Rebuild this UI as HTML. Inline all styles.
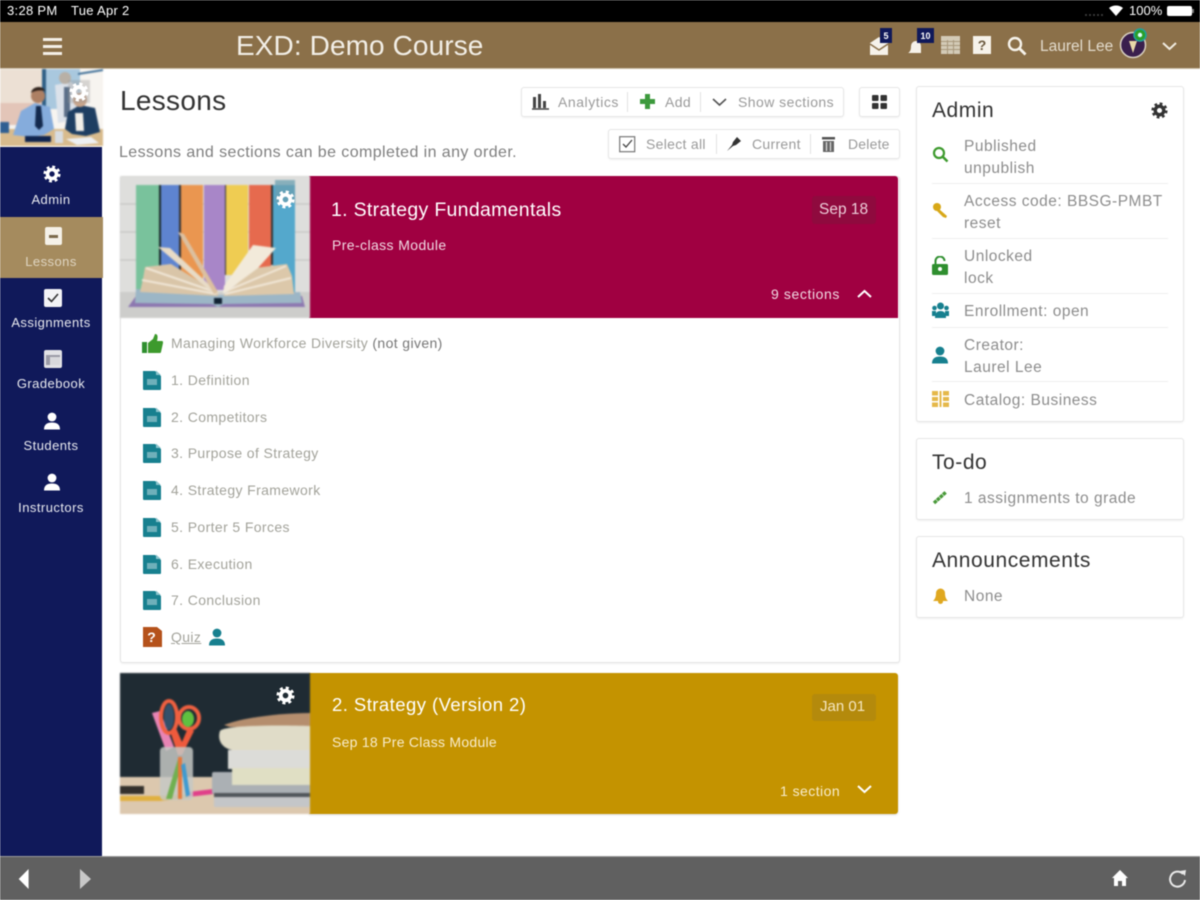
<!DOCTYPE html>
<html lang="en"><head><meta charset="utf-8"><title>Lessons</title>
<style>
html,body{margin:0;padding:0;background:#fff}
#p{position:relative;width:1200px;height:900px;overflow:hidden;background:#fff;font-family:"Liberation Sans",sans-serif;filter:blur(.45px)}
#p div,#p svg,#p span.t{position:absolute}
.t{white-space:nowrap;line-height:20px;height:20px;font-size:14px;color:#8c8c8c}
.w{color:#fff}
.n{color:#fff;font-size:13px;letter-spacing:.45px;width:102px;left:0;text-align:center;opacity:.9}
.box{background:#fff;border:1px solid #e6e6e6;border-radius:3px;box-sizing:border-box;box-shadow:0 1px 2px rgba(0,0,0,.06)}
.l{color:#a3a39b;font-size:14px;left:171px;letter-spacing:.38px}
.p{color:#8d8d8d;font-size:15.5px;left:964px;letter-spacing:.5px}
.h{color:#333;font-size:21px;left:932px;letter-spacing:.55px}
.b{font-size:14px;color:#9a9a9a;letter-spacing:.4px}
.sep{width:1px;background:#e2e2e2}
.hr{left:932px;width:236px;height:1px;background:#eee}
.img{filter:blur(.8px)}
</style></head><body><div id="p">
<svg width="0" height="0" style="left:0;top:0"><defs>
<symbol id="gear" viewBox="0 0 20 20"><circle cx="10" cy="10" r="5" fill="none" stroke="currentColor" stroke-width="4"/><circle cx="10" cy="10" r="8" fill="none" stroke="currentColor" stroke-width="3" stroke-dasharray="3.2 3.08"/></symbol>
<symbol id="doc" viewBox="0 0 18 20"><path d="M0 1h12l6 5v13a1 1 0 0 1-1 1H1a1 1 0 0 1-1-1z" fill="#17808f"/><path d="M13 0.5l5 4.500h-5z" fill="#8cc4cc"/><rect x="4" y="9" width="10" height="6" fill="#6fb0ba"/></symbol>
<symbol id="user" viewBox="0 0 16 18"><circle cx="8" cy="5" r="4.400" fill="currentColor"/><path d="M0 17.500c0-5 3-7 8-7s8 2 8 7z" fill="currentColor"/></symbol>
</defs></svg>

<!-- status bar -->
<div style="left:0;top:0;width:1200px;height:22px;background:#000"></div>
<span class="t w" style="left:7px;top:1px;font-size:13px;letter-spacing:.3px">3:28 PM</span>
<span class="t w" style="left:71px;top:1px;font-size:13px;letter-spacing:.3px">Tue Apr 2</span>
<svg style="left:1085px;top:5px" width="40" height="12" viewBox="0 0 40 12"><g fill="#444"><circle cx="1" cy="10" r="1"/><circle cx="5" cy="10" r="1"/><circle cx="9" cy="10" r="1"/><circle cx="13" cy="10" r="1"/><circle cx="17" cy="10" r="1"/></g><path d="M24 4a11 11 0 0 1 14 0l-7 8z" fill="#fff" transform="translate(0 -1)"/></svg>
<span class="t w" style="left:1129px;top:1px;font-size:13px">100%</span>
<div style="left:1167px;top:6px;width:25px;height:10px;background:#fff;border-radius:2px"></div>
<div style="left:1192px;top:9px;width:2px;height:4px;background:#777"></div>

<!-- header -->
<div style="left:0;top:22px;width:1200px;height:46px;background:#8b7049;border-bottom:1px solid #c9bda6"></div>
<div style="left:43px;top:38px;width:19px;height:2.500px;background:#f4efe6"></div>
<div style="left:43px;top:45px;width:19px;height:2.500px;background:#f4efe6"></div>
<div style="left:43px;top:52px;width:19px;height:2.500px;background:#f4efe6"></div>
<span class="t" style="left:236px;top:33px;height:26px;line-height:26px;font-size:28px;letter-spacing:.1px;color:#f2eee6">EXD: Demo Course</span>
<svg style="left:868px;top:36px" width="22" height="20" viewBox="0 0 22 20"><path d="M2 7l9-6 9 6v12H2z" fill="#f6f2ea"/><path d="M2 8l9 6 9-6" fill="none" stroke="#8b7049" stroke-width="1.500"/></svg>
<div style="left:880px;top:28px;width:12px;height:15px;background:#10195a"></div>
<span class="t w" style="left:880px;top:26px;width:12px;text-align:center;font-size:9px;font-weight:bold">5</span>
<svg style="left:906px;top:36px" width="20" height="20" viewBox="0 0 20 20"><path d="M2 17c2-1 3-3 3-7a5 5 0 0 1 10 0v7z" fill="#f6f2ea"/></svg>
<div style="left:917px;top:28px;width:17px;height:15px;background:#10195a"></div>
<span class="t w" style="left:917px;top:26px;width:17px;text-align:center;font-size:9px;font-weight:bold">10</span>
<svg style="left:941px;top:36px" width="19" height="18" viewBox="0 0 19 18"><rect width="19" height="18" fill="#d3cab6"/><path d="M0 5.500h19M0 9.500h19M0 13.500h19M6.500 4v14M12.500 4v14" stroke="#a8987c" stroke-width="1"/></svg>
<div style="left:973px;top:36px;width:18px;height:18px;background:#f6f2ea"></div>
<span class="t" style="left:973px;top:35px;width:18px;text-align:center;font-size:14px;font-weight:bold;color:#6b5a3f">?</span>
<svg style="left:1007px;top:36px" width="20" height="20" viewBox="0 0 20 20"><circle cx="8" cy="8" r="6" fill="none" stroke="#f6f2ea" stroke-width="2.400"/><path d="M12.500 12.500l6 6" stroke="#f6f2ea" stroke-width="2.800"/></svg>
<span class="t" style="left:1040px;top:37px;font-size:15.5px;color:#e2dacb">Laurel Lee</span>
<svg style="left:1119px;top:27px" width="30" height="33" viewBox="0 0 30 33"><circle cx="14" cy="18" r="12.500" fill="#3a1f4d" stroke="#d8d0c0" stroke-width="1.500"/><path d="M10 14l4 12 4-12z" fill="#e8d8a8"/><circle cx="21" cy="8" r="6" fill="#2aa02a" stroke="#1fa0a0" stroke-width="1.500"/><circle cx="21" cy="8" r="2.200" fill="#dff"/></svg>
<svg style="left:1162px;top:41px" width="15" height="10" viewBox="0 0 15 10"><path d="M1 2l6.500 6L14 2" fill="none" stroke="#f0ebe0" stroke-width="2"/></svg>

<!-- sidebar -->
<div style="left:0;top:147px;width:102px;height:710px;background:#10195a"></div>
<svg class="img" style="left:0;top:69px" width="103" height="77" viewBox="0 0 103 77">
<rect width="103" height="77" fill="#f7f4f0"/>
<rect x="0" y="0" width="42" height="50" fill="#ece0d4"/><rect x="0" y="34" width="42" height="22" fill="#e3c5b8"/>
<rect x="44" y="0" width="36" height="40" fill="#a9c8de"/><rect x="42" y="0" width="4" height="44" fill="#2f5f86"/>
<path d="M78 4l25-4v2l-25 4z" fill="#3f6f98"/>
<rect x="0" y="60" width="103" height="17" fill="#d8bb8d"/>
<rect x="0" y="53" width="9" height="11" fill="#2f5f92"/>
<path d="M55 16l16-3 7 5 2 32-22 4z" fill="#dce2ea"/><rect x="64" y="18" width="6" height="30" fill="#5b6f88"/><circle cx="65" cy="9" r="6" fill="#b8b0a6"/>
<path d="M13 66l8-24 14-8 15 4 4 22-10 6-14 2z" fill="#85acdc"/><path d="M36 37h5l2 20-4 4-4-4z" fill="#13294d"/>
<circle cx="38" cy="27" r="7" fill="#ad8064"/><path d="M31 24c1-7 12-8 14-2-4-1-10-1-14 2z" fill="#2d2019"/>
<path d="M65 60l3-17 12-7 15 3 5 24-14 4-14-2z" fill="#1e3e62"/><path d="M75 44h8l1 18H76z" fill="#f2efe9"/><circle cx="80" cy="31" r="7" fill="#c9a58b"/>
<rect x="25" y="67" width="26" height="6" fill="#10254f"/>
<path d="M66 70l25-2 8 6-22 2z" fill="#eef0f2"/><rect x="55" y="62" width="8" height="12" fill="#d8dde2"/>
<rect x="68" y="11" width="22" height="23" fill="#999" opacity=".35"/>
</svg>
<svg style="left:69px;top:82px;color:#fff" width="20" height="20"><use href="#gear"/></svg>
<svg style="left:43px;top:165px;color:#fff" width="18" height="18"><use href="#gear"/></svg>
<span class="t n" style="top:190px">Admin</span>
<div style="left:0;top:217px;width:103px;height:61px;background:#a58b5e"></div>
<div style="left:45px;top:227px;width:17px;height:18px;background:#f5f1e8;border-radius:2px"></div><div style="left:49px;top:235px;width:9px;height:3px;background:#7c6a4b"></div>
<span class="t n" style="top:252px;color:#e5dccb">Lessons</span>
<div style="left:44px;top:289px;width:18px;height:18px;background:#f3f3f6;border-radius:2px"></div>
<svg style="left:46px;top:292px" width="14" height="12"><path d="M2 6l3.500 3.500L12 2" fill="none" stroke="#333" stroke-width="1.600"/></svg>
<span class="t n" style="top:313px">Assignments</span>
<div style="left:44px;top:350px;width:18px;height:18px;background:#e2e2e6;border-radius:2px"></div>
<div style="left:46px;top:355px;width:14px;height:10px;background:#9a9aa6"></div><div style="left:50px;top:357px;width:10px;height:8px;background:#d8d8dc"></div>
<span class="t n" style="top:374px">Gradebook</span>
<svg style="left:44px;top:412px;color:#fff" width="16" height="18"><use href="#user"/></svg>
<span class="t n" style="top:436px">Students</span>
<svg style="left:44px;top:473px;color:#fff" width="16" height="18"><use href="#user"/></svg>
<span class="t n" style="top:498px">Instructors</span>

<!-- main head -->
<span class="t" style="left:120px;top:87px;height:28px;line-height:28px;font-size:28px;letter-spacing:.3px;color:#333">Lessons</span>
<span class="t" style="left:119px;top:141px;font-size:16px;letter-spacing:.41px;color:#7f7f7f;margin-top:2px">Lessons and sections can be completed in any order.</span>

<div class="box" style="left:521px;top:87px;width:323px;height:30px"></div>
<svg style="left:531px;top:94px" width="19" height="16" viewBox="0 0 19 16"><path d="M1 15h17" stroke="#444" stroke-width="1.500"/><rect x="2" y="3" width="3" height="11" fill="#444"/><rect x="7" y="0" width="3" height="14" fill="#444"/><rect x="12" y="7" width="3" height="7" fill="#444"/></svg>
<span class="t b" style="left:558px;top:92px;letter-spacing:.55px">Analytics</span>
<div class="sep" style="left:627px;top:92px;height:20px"></div>
<svg style="left:640px;top:94px" width="15" height="15"><path d="M5 0h5v5h5v5h-5v5H5v-5H0V5h5z" fill="#3d9a3d"/></svg>
<span class="t b" style="left:665px;top:92px">Add</span>
<div class="sep" style="left:700px;top:92px;height:20px"></div>
<svg style="left:712px;top:98px" width="15" height="9"><path d="M1 1l6.500 6L14 1" fill="none" stroke="#555" stroke-width="1.600"/></svg>
<span class="t b" style="left:738px;top:92px;letter-spacing:.45px">Show sections</span>
<div class="box" style="left:859px;top:87px;width:41px;height:30px"></div>
<svg style="left:872px;top:95px" width="15" height="14"><g fill="#333"><rect width="6.500" height="6" rx="1"/><rect x="8.500" width="6.500" height="6" rx="1"/><rect y="8" width="6.500" height="6" rx="1"/><rect x="8.500" y="8" width="6.500" height="6" rx="1"/></g></svg>

<div class="box" style="left:608px;top:129px;width:292px;height:30px"></div>
<svg style="left:619px;top:136px" width="17" height="17"><rect x=".7" y=".7" width="15" height="15" fill="none" stroke="#777" stroke-width="1.200"/><path d="M4 8l3 3 6-7" fill="none" stroke="#444" stroke-width="1.300"/></svg>
<span class="t b" style="left:646px;top:134px;letter-spacing:.3px">Select all</span>
<div class="sep" style="left:716px;top:134px;height:20px"></div>
<svg style="left:726px;top:136px" width="16" height="16" viewBox="0 0 16 16"><path d="M1 15l5-6 1-3 4-5 4 4-5 4-3 1z" fill="#333"/></svg>
<span class="t b" style="left:752px;top:134px;letter-spacing:.3px">Current</span>
<div class="sep" style="left:810px;top:134px;height:20px"></div>
<svg style="left:821px;top:136px" width="15" height="16" viewBox="0 0 15 16"><rect x="1" y="1" width="13" height="2.500" fill="#555"/><path d="M2 5h11v11H2z" fill="#666"/><path d="M5.500 6v9M9.500 6v9" stroke="#ddd" stroke-width="1.200"/></svg>
<span class="t b" style="left:848px;top:134px;letter-spacing:.2px">Delete</span>

<!-- card 1 -->
<div class="box" style="left:120px;top:176px;width:780px;height:487px;border-color:#e4e4e4"></div>
<div style="left:309px;top:176px;width:589px;height:142px;background:#a00041;border-radius:0 3px 0 0"></div>
<svg class="img" style="left:120px;top:176px" width="190" height="142" viewBox="0 0 190 142">
<rect width="190" height="142" fill="#dededc"/>
<rect y="116" width="190" height="26" fill="#cdcdcb"/>
<path d="M0 28h190M0 56h190M0 84h190" stroke="#c8c8c6" stroke-width="1.500"/>
<rect x="16" y="9" width="23" height="110" fill="#79c29c"/>
<rect x="39" y="9" width="2" height="90" fill="#1a2a2a"/>
<rect x="41" y="9" width="18" height="90" fill="#5e84d0"/>
<rect x="59" y="9" width="2" height="90" fill="#333"/>
<rect x="61" y="9" width="22" height="100" fill="#ea9650"/>
<rect x="84" y="9" width="21" height="105" fill="#a886c8"/>
<rect x="105" y="9" width="1.500" height="90" fill="#333"/>
<rect x="106" y="9" width="22" height="90" fill="#efcc52"/>
<rect x="129" y="9" width="22" height="85" fill="#e66a4e"/>
<rect x="151" y="9" width="2" height="80" fill="#333"/>
<rect x="153" y="9" width="22" height="108" fill="#54a8cc"/>
<path d="M8 131l8-11h166l3 11z" fill="#8d78b0"/>
<path d="M15 127l1-14 82 6 4 0 78-3 2 11-78 1-6 3-6-3z" fill="#9cb6c6"/>
<path d="M98 120L20 116l3-13 2-12 26-3 47 29z" fill="#d9c5a8"/>
<path d="M22 104l74 14M26 92l72 25" stroke="#f0e6d6" stroke-width="2"/>
<path d="M38 71l12 1 48 45-4 1z" fill="#e8dbc6"/>
<path d="M58 56l6 2 34 58-4 2z" fill="#dcc0a0"/>
<path d="M103 120l71-2-2-18-5-12-32 4z" fill="#dcc8aa"/>
<path d="M105 118l66-16M104 116l62-26" stroke="#f0e6d6" stroke-width="2"/>
<path d="M133 69l23 3-18 20-35 26 1-8z" fill="#f2eada"/>
<path d="M94 122h8v6h-8z" fill="#123"/>
<rect x="155" y="4" width="20" height="23" fill="#6b9fb0" opacity=".75"/>
</svg>
<svg style="left:276px;top:190px;color:#fff" width="19" height="19"><use href="#gear"/></svg>
<span class="t w" style="left:331px;top:199px;height:22px;line-height:22px;font-size:19.500px;letter-spacing:.3px">1. Strategy Fundamentals</span>
<span class="t" style="left:332px;top:235px;color:#f0d8e2;font-size:14px;letter-spacing:.4px">Pre-class Module</span>
<div style="left:812px;top:196px;width:64px;height:28px;background:#8f0a3e;border-radius:3px"></div>
<span class="t" style="left:819px;top:200px;color:#eccdd8;font-size:15.500px">Sep 18</span>
<span class="t" style="left:771px;top:284px;color:#f0d8e2;font-size:14px;letter-spacing:.6px">9 sections</span>
<svg style="left:857px;top:288px" width="15" height="11"><path d="M1 9l6.500-6L14 9" fill="none" stroke="#fff" stroke-width="2"/></svg>

<svg style="left:142px;top:334px" width="21" height="20" viewBox="0 0 21 20"><rect y="8" width="5" height="11" fill="#2f8f2f"/><path d="M6 9l5-4 2-5c3 0 3 3 2 7h5c1 0 1 1 1 2l-2 9c0 1-1 1-2 1H6z" fill="#3d9a2d"/></svg>
<span class="t l" style="top:333px">Managing Workforce Diversity <span style="color:#777">(not given)</span></span>
<svg style="left:143px;top:370px" width="18" height="20"><use href="#doc"/></svg><span class="t l" style="top:370px">1. Definition</span>
<svg style="left:143px;top:407px" width="18" height="20"><use href="#doc"/></svg><span class="t l" style="top:407px">2. Competitors</span>
<svg style="left:143px;top:443px" width="18" height="20"><use href="#doc"/></svg><span class="t l" style="top:443px">3. Purpose of Strategy</span>
<svg style="left:143px;top:480px" width="18" height="20"><use href="#doc"/></svg><span class="t l" style="top:480px">4. Strategy Framework</span>
<svg style="left:143px;top:517px" width="18" height="20"><use href="#doc"/></svg><span class="t l" style="top:517px">5. Porter 5 Forces</span>
<svg style="left:143px;top:554px" width="18" height="20"><use href="#doc"/></svg><span class="t l" style="top:554px">6. Execution</span>
<svg style="left:143px;top:590px" width="18" height="20"><use href="#doc"/></svg><span class="t l" style="top:590px">7. Conclusion</span>
<svg style="left:143px;top:627px" width="19" height="20" viewBox="0 0 19 20"><path d="M0 0h14l5 4v16H0z" fill="#b5521b"/></svg>
<span class="t w" style="left:143px;top:627px;width:17px;text-align:center;font-weight:bold;font-size:14px">?</span>
<span class="t l" style="top:627px;text-decoration:underline">Quiz</span>
<svg style="left:209px;top:628px;color:#17808f" width="16" height="18"><use href="#user"/></svg>

<!-- card 2 -->
<div style="left:309px;top:673px;width:589px;height:141px;background:#c49300;border-radius:0 3px 3px 0;box-shadow:0 1px 2px rgba(0,0,0,.15)"></div>
<svg class="img" style="left:120px;top:673px" width="190" height="141" viewBox="0 0 190 141">
<rect width="190" height="141" fill="#1f2b33"/>
<rect y="104" width="190" height="37" fill="#dcc8ae"/>
<path d="M0 113h24v8H0z" fill="#33302c"/>
<path d="M0 123h40l30-2v4l-30 3H0z" fill="#e0b040"/><path d="M68 119l34-4v5l-34 4z" fill="#e0408a"/>
<path d="M32 40l8-2 14 36-8 4z" fill="#e884b4"/>
<ellipse cx="49" cy="44" rx="8" ry="16" fill="none" stroke="#ef6040" stroke-width="4"/><ellipse cx="49" cy="44" rx="5" ry="13" fill="#33506a"/>
<ellipse cx="69" cy="45" rx="10" ry="11" fill="none" stroke="#ef6040" stroke-width="4"/><ellipse cx="68" cy="46" rx="6" ry="8" fill="#60c040"/>
<path d="M50 58l8 24 4 0 12-24-6-3-6 14-6-14z" fill="#ef5a3c"/>
<rect x="40" y="74" width="33" height="53" rx="4" fill="#c6c8c4" opacity=".85"/>
<path d="M46 126l12-40 4 2-10 38z" fill="#70b050"/><path d="M58 84h4v42h-4z" fill="#e8783a"/><path d="M65 90l5 32-4 2-5-32z" fill="#3f9ad0"/>
<path d="M104 52c20-8 60-12 86-12v14H110z" fill="#b58e6e"/>
<path d="M100 58c4-6 60-6 90-5v26l-78-2c-10-2-15-10-12-19z" fill="#e0dcc8"/>
<rect x="108" y="77" width="82" height="19" fill="#dcdcd8"/>
<rect x="92" y="99" width="98" height="22" rx="2" fill="#abb0b4"/>
<rect x="112" y="95" width="78" height="17" fill="#e0dfc4"/>
<rect x="94" y="120" width="96" height="4" fill="#50555a"/>
<rect x="94" y="124" width="96" height="10" rx="1" fill="#c4c6c8"/>
</svg>
<svg style="left:276px;top:686px;color:#fff" width="19" height="19"><use href="#gear"/></svg>
<span class="t w" style="left:332px;top:694px;height:22px;line-height:22px;font-size:18.500px;letter-spacing:.45px">2. Strategy (Version 2)</span>
<span class="t" style="left:332px;top:732px;color:#f8eccb;font-size:14px;letter-spacing:.27px">Sep 18 Pre Class Module</span>
<div style="left:812px;top:694px;width:64px;height:27px;background:#b48a0c;border-radius:3px"></div>
<span class="t" style="left:820px;top:697px;color:#f5e6c0;font-size:15px">Jan 01</span>
<span class="t" style="left:780px;top:781px;color:#f8eccb;font-size:14px;letter-spacing:.45px">1 section</span>
<svg style="left:857px;top:785px" width="15" height="10"><path d="M1 1l6.500 6L14 1" fill="none" stroke="#fff" stroke-width="2"/></svg>

<!-- right panels -->
<div class="box" style="left:916px;top:86px;width:268px;height:336px"></div>
<span class="t h" style="top:101px">Admin</span>
<svg style="left:1151px;top:102px;color:#333" width="17" height="17"><use href="#gear"/></svg>
<svg style="left:932px;top:146px" width="17" height="17" viewBox="0 0 17 17"><circle cx="7" cy="7" r="5" fill="none" stroke="#3d9a2d" stroke-width="2.200"/><path d="M10.500 10.500l5 5" stroke="#3d9a2d" stroke-width="2.500"/></svg>
<span class="t p" style="top:137px">Published</span>
<span class="t p" style="top:159px">unpublish</span>
<div class="hr" style="top:183px"></div>
<svg style="left:932px;top:202px" width="17" height="17" viewBox="0 0 17 17"><circle cx="5" cy="5" r="4" fill="#d8a818"/><path d="M7 7l8 7-1 2-3-1-6-6z" fill="#d8a818"/></svg>
<span class="t p" style="top:192px">Access code: BBSG-PMBT</span>
<span class="t p" style="top:214px">reset</span>
<div class="hr" style="top:238px"></div>
<svg style="left:932px;top:256px" width="17" height="19" viewBox="0 0 17 19"><rect y="8" width="16" height="11" rx="1.500" fill="#2f8f2f"/><path d="M3.500 8V5a4.500 4.500 0 0 1 9 0" fill="none" stroke="#2f8f2f" stroke-width="2"/><circle cx="8" cy="13" r="2" fill="#fff"/></svg>
<span class="t p" style="top:247px">Unlocked</span>
<span class="t p" style="top:269px">lock</span>
<div class="hr" style="top:293px"></div>
<svg style="left:932px;top:302px" width="17" height="16" viewBox="0 0 17 16"><g fill="#17808f"><circle cx="8.500" cy="4" r="3.500"/><circle cx="2.500" cy="6" r="2.300"/><circle cx="14.500" cy="6" r="2.300"/><path d="M3 16c0-5 2-7 5.500-7S14 11 14 16z"/><rect x="0" y="9" width="4" height="5"/><rect x="13" y="9" width="4" height="5"/></g></svg>
<span class="t p" style="top:302px">Enrollment: open</span>
<div class="hr" style="top:327px"></div>
<svg style="left:932px;top:346px;color:#17808f" width="16" height="18"><use href="#user"/></svg>
<span class="t p" style="top:336px">Creator:</span>
<span class="t p" style="top:358px">Laurel Lee</span>
<div class="hr" style="top:381px"></div>
<svg style="left:932px;top:391px" width="17" height="16" viewBox="0 0 17 16"><rect width="17" height="16" fill="#e5b84a"/><path d="M0 4.500h6v1.500H0zM11 4.500h6v1.500h-6zM0 10h6v1.500H0zM11 10h6v1.500h-6zM6 0h1.500v16H6zM9.500 0H11v16H9.500z" fill="#fff"/></svg>
<span class="t p" style="top:391px">Catalog: Business</span>

<div class="box" style="left:916px;top:438px;width:268px;height:82px"></div>
<span class="t h" style="top:453px">To-do</span>
<svg style="left:932px;top:489px" width="16" height="16"><path d="M2 14L14 3" stroke="#4a9a3a" stroke-width="3.400" stroke-dasharray="3.500 .6"/></svg>
<span class="t p" style="top:489px">1 assignments to grade</span>

<div class="box" style="left:916px;top:536px;width:268px;height:82px"></div>
<span class="t h" style="top:551px">Announcements</span>
<svg style="left:932px;top:586px" width="17" height="18" viewBox="0 0 17 18"><path d="M1 15c2-2 3-4 3-8a4.500 4.500 0 0 1 9 0c0 4 1 6 3 8z" fill="#e0a820"/><circle cx="8.500" cy="15.500" r="2.500" fill="#e0a820"/></svg>
<span class="t p" style="top:587px">None</span>

<!-- bottom bar -->
<div style="left:0;top:856px;width:1200px;height:44px;background:#606060;border-top:1px solid #9a9a9a;box-sizing:border-box"></div>
<svg style="left:15px;top:868px" width="15" height="22"><path d="M14 1L3 11l11 10z" fill="#fff" transform="matrix(.9 0 0 1 1 0)"/></svg>
<svg style="left:79px;top:868px" width="15" height="22"><path d="M1 1l11 10L1 21z" fill="#c8c8c8"/></svg>
<svg style="left:1111px;top:869px" width="18" height="18" viewBox="0 0 18 18"><path d="M9 1l8 8h-2v8h-4v-5H7v5H3V9H1z" fill="#fff"/></svg>
<svg style="left:1169px;top:869px" width="19" height="20" viewBox="0 0 19 20"><path d="M14 5a7.500 7.500 0 1 0 2 6" fill="none" stroke="#e8e8e8" stroke-width="2"/><path d="M11 2l6-1-1 6z" fill="#e8e8e8"/></svg>
</div></body></html>
